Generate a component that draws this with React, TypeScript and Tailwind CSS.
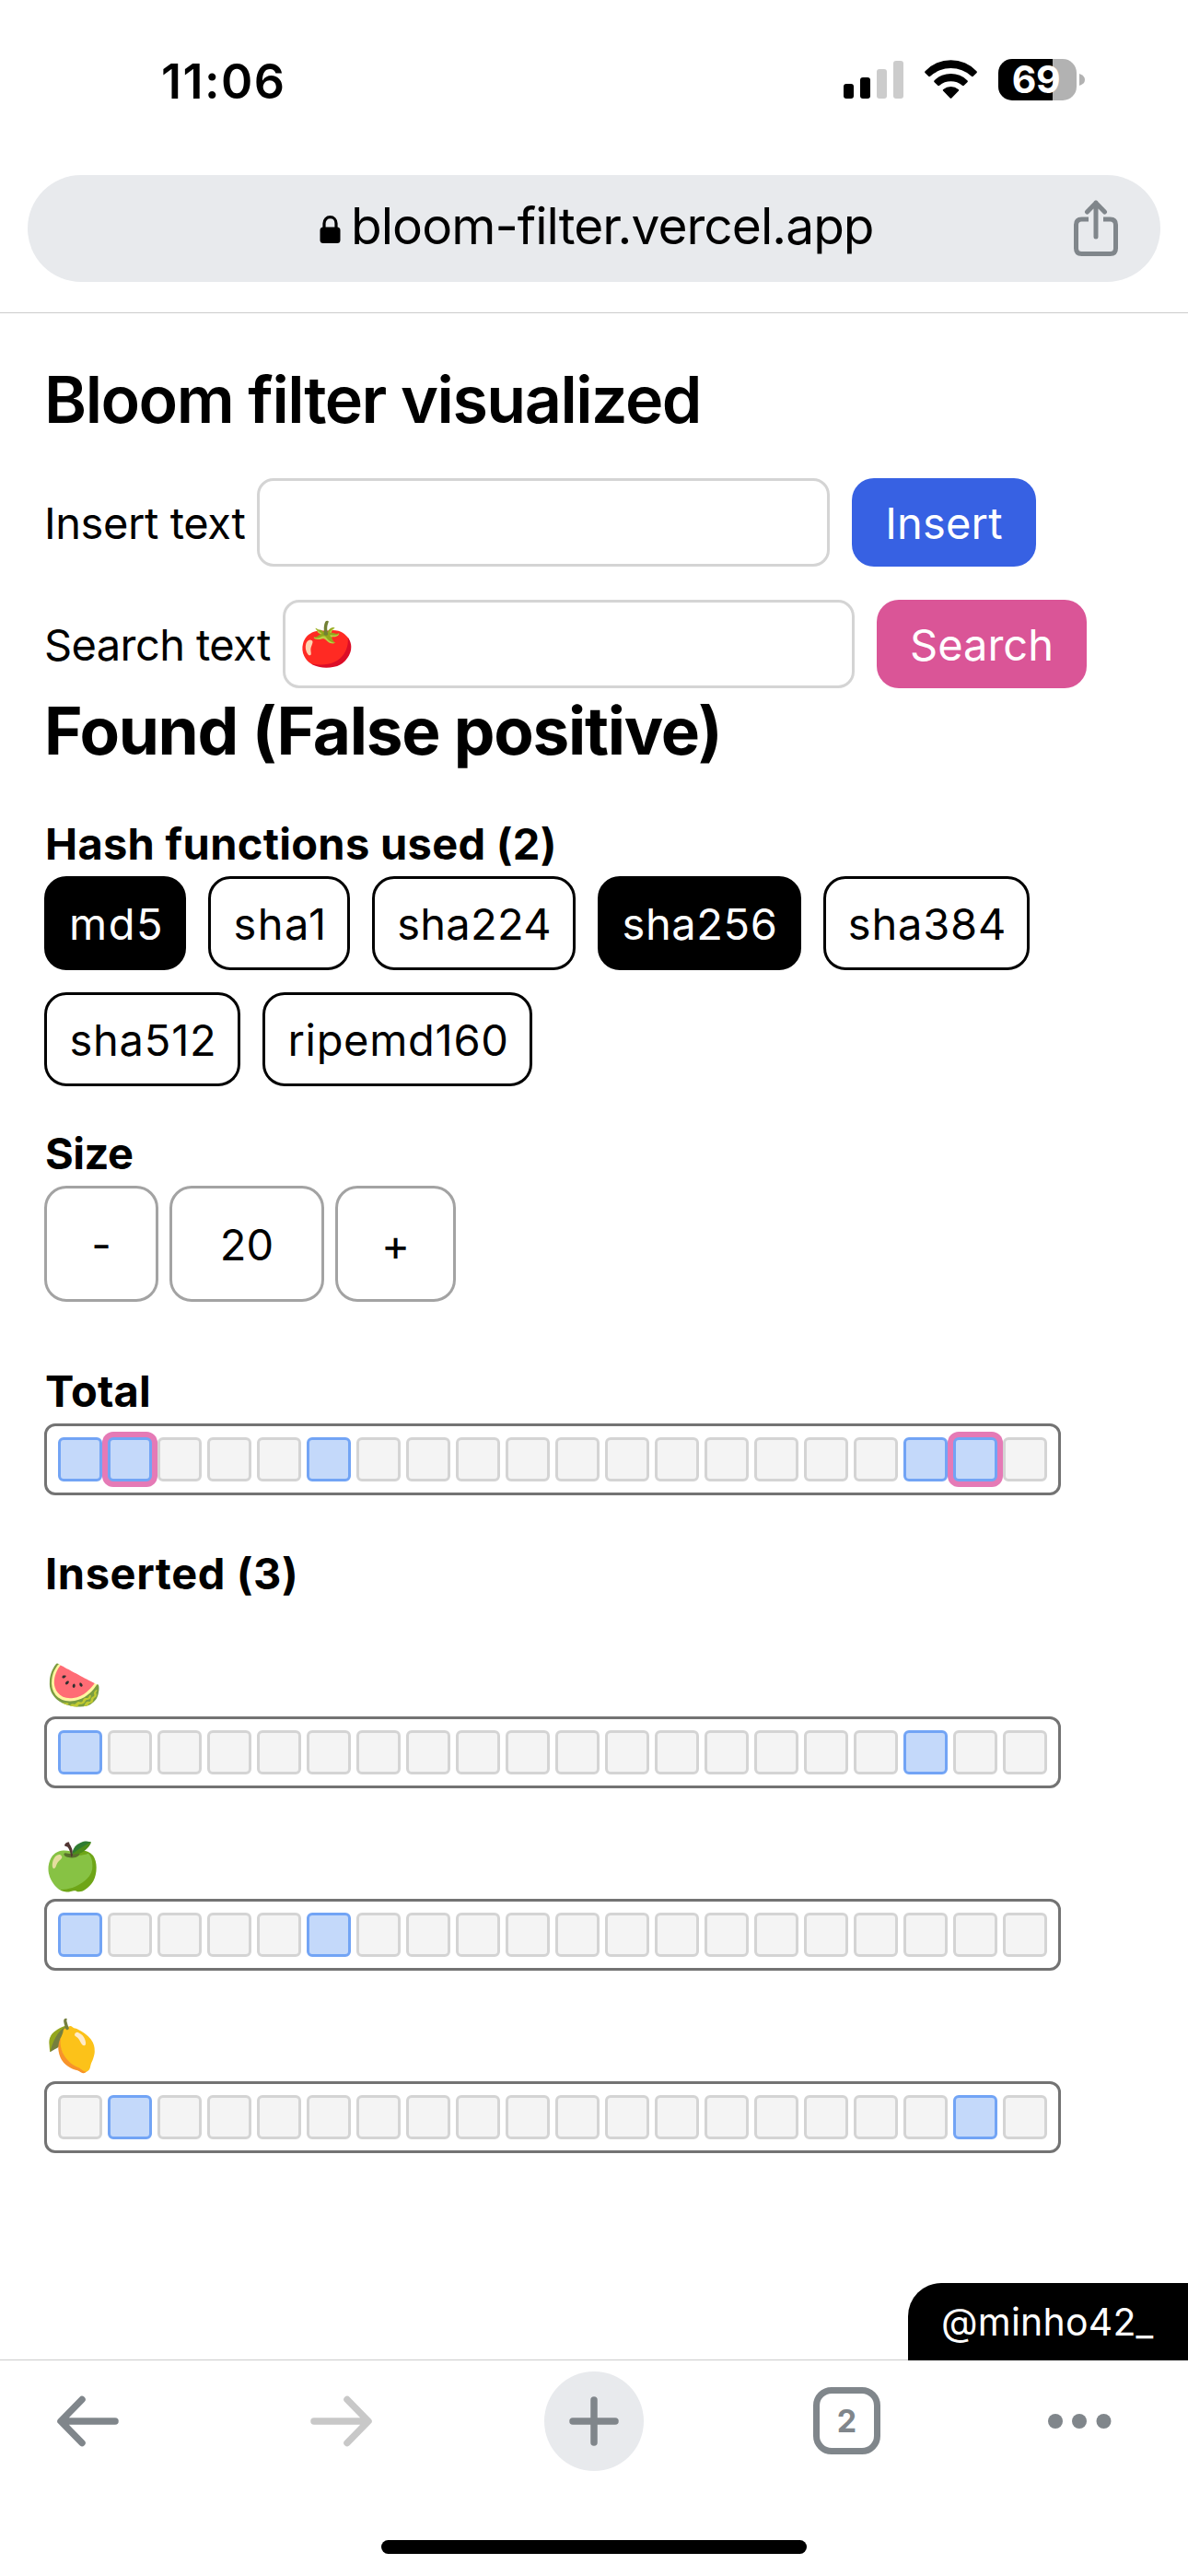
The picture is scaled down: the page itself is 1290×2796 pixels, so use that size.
import type { ReactNode } from "react";

const HASHES = [
  { name: "md5", active: true, cls: "w-[154px] pl-[3px] tracking-[1.5px]" },
  { name: "sha1", active: false, cls: "w-[154px] pl-[3px] tracking-[1.5px]" },
  { name: "sha224", active: false, cls: "w-[221px] pl-[1px] tracking-[0.3px]" },
  { name: "sha256", active: true, cls: "w-[221px] pl-[1px] tracking-[0.6px]" },
  { name: "sha384", active: false, cls: "w-[224px] pl-[2px] tracking-[0.8px]" },
  { name: "sha512", active: false, cls: "w-[213px] pl-[2px] tracking-[0.8px]" },
  { name: "ripemd160", active: false, cls: "w-[293px] pl-[2px] tracking-[0.7px]" },
];

const INSERTED = [
  { emoji: "🍉", bits: [0, 17], cls: "translate-x-[2px] translate-y-[3px] rotate-[4deg]" },
  { emoji: "🍏", bits: [0, 5], cls: "translate-x-[1px] scale-[1.04]" },
  { emoji: "🍋", bits: [1, 18], cls: "translate-x-[2px] -translate-y-[2px] rotate-[28deg]" },
];

const SIZE = 20;

function StatusBar() {
  return (
    <div className="flex h-[190px] items-start justify-between pl-[175px] pr-[112px] pt-[64px]">
      <div className="-mt-[7px] text-[52px] font-semibold leading-[64px] tracking-[1.5px]">11:06</div>
      <div className="flex h-[45px] items-start">
        <svg className="mt-[2px] h-[41px] w-[65px]" viewBox="0 0 65 41">
          <rect x="0" y="25" width="11" height="16" rx="3" fill="#000" />
          <rect x="18" y="18" width="11" height="23" rx="3" fill="#000" />
          <rect x="36" y="9" width="11" height="32" rx="3" fill="#ccc" />
          <rect x="54" y="0" width="11" height="41" rx="3" fill="#ccc" />
        </svg>
        <svg className="ml-[23px] mt-px h-[42px] w-[57px]" viewBox="0 0 57 42" fill="#000">
          <path d="M0.6 14.2Q-0.4 13.2 0.6 12.2A38.5 38.5 0 0 1 56.4 12.2Q57.4 13.2 56.4 14.2L53 17.6Q52 18.6 50.9 17.7A33.5 33.5 0 0 0 6.1 17.7Q5 18.6 4 17.6Z" />
          <path d="M10.6 24.2Q9.6 23.2 10.7 22.2A25.5 25.5 0 0 1 46.3 22.2Q47.4 23.2 46.4 24.2L43 27.6Q42 28.6 40.9 27.7A19.5 19.5 0 0 0 16.1 27.7Q15 28.6 14 27.6Z" />
          <path d="M20.2 33.8Q19.2 32.8 20.3 31.9A13 13 0 0 1 36.7 31.9Q37.8 32.8 36.8 33.8L29.3 41.4Q28.5 42.2 27.7 41.4Z" />
        </svg>
        <div className="ml-[23px] flex h-[45px] w-[85px] items-center justify-center rounded-[15px] bg-[linear-gradient(to_right,#000_59px,#b2b2b2_59px)] pr-[3px]">
          <span className="text-[41px] font-bold leading-[45px] tracking-[-0.5px] text-white">69</span>
        </div>
        <svg className="ml-[3px] mt-[16px] h-[13px] w-[6px]" viewBox="0 0 6 13">
          <path d="M0 0Q6 2 6 6.5Q6 11 0 13Z" fill="#b2b2b2" />
        </svg>
      </div>
    </div>
  );
}

function UrlBar() {
  return (
    <div className="mx-[30px] flex h-[116px] items-center rounded-full bg-[#e8eaed] pl-[317px] pr-[45px]">
      <svg className="mt-[1px] h-[30px] w-[23px]" viewBox="0 0 23 30">
        <path d="M5 14V8.5C5 4.5 7.8 1.6 11.5 1.6S18 4.5 18 8.5V14" fill="none" stroke="#000" strokeWidth="3.2" />
        <rect x="0.5" y="12.5" width="22" height="17.5" rx="3.5" fill="#000" />
      </svg>
      <div className="-mt-[6px] ml-[11px] whitespace-nowrap text-[55px] leading-[72px] tracking-[-0.95px]">bloom-filter.vercel.app</div>
      <svg
        className="ml-auto h-[64px] w-[50px]"
        viewBox="0 0 50 64"
        fill="none"
        stroke="#80868b"
        strokeWidth="5"
        strokeLinecap="round"
        strokeLinejoin="round"
      >
        <path d="M25 41V4M15.5 14L25 4.2L34.5 14" />
        <path d="M17 22H9.5Q3.5 22 3.5 28V53.5Q3.5 59.5 9.5 59.5H40.5Q46.5 59.5 46.5 53.5V28Q46.5 22 40.5 22H33" strokeLinecap="butt" />
      </svg>
    </div>
  );
}

function Heading({ children, className }: { children: ReactNode; className: string }) {
  return <h2 className={`h-[72px] whitespace-nowrap pl-px text-[47px] font-bold leading-[74px] ${className}`}>{children}</h2>;
}

function BitRow({ bits, marked = [] }: { bits: number[]; marked?: number[] }) {
  return (
    <div className="flex h-[78px] w-[1104px] gap-[6px] rounded-[12px] border-3 border-[#737373] p-[12px]">
      {Array.from({ length: SIZE }, (_, i) => (
        <div
          key={i}
          className={`h-[48px] w-[48px] rounded-[6px] border-3 ${
            bits.includes(i) ? "border-[#72a4f5] bg-[#c4d9fa]" : "border-[#d4d4d4] bg-[#f4f4f4]"
          } ${marked.includes(i) ? "ring-6 ring-[#e57ab6]" : ""}`}
        />
      ))}
    </div>
  );
}

function BottomBar() {
  return (
    <div className="h-[235px] border-t border-[#ccc]">
      <div className="flex h-[131px] items-center pl-[60px]">
        <svg className="h-[64px] w-[71px]" viewBox="0 0 71 64" fill="none" stroke="#80868b" strokeWidth="7.5" strokeLinecap="round" strokeLinejoin="round">
          <path d="M65 32H7M29 8.5L6 32L29 55.5" />
        </svg>
        <svg className="ml-[204px] h-[64px] w-[71px]" viewBox="0 0 71 64" fill="none" stroke="#c8c8c8" strokeWidth="7.5" strokeLinecap="round" strokeLinejoin="round">
          <path d="M6 32H64M42 8.5L65 32L42 55.5" />
        </svg>
        <div className="ml-[185px] flex h-[108px] w-[108px] items-center justify-center rounded-full bg-[#e8eaed]">
          <svg className="h-[54px] w-[54px]" viewBox="0 0 54 54" fill="none" stroke="#80868b" strokeWidth="7.5" strokeLinecap="round">
            <path d="M27 4V50M4 27H50" />
          </svg>
        </div>
        <div className="ml-[184px] flex h-[73px] w-[73px] items-center justify-center rounded-[20px] border-[7px] border-[#80868b] text-[34px] font-bold leading-[40px] text-[#80868b]">
          2
        </div>
        <svg className="ml-[181px] h-[16px] w-[70px]" viewBox="0 0 70 16" fill="#80868b">
          <circle cx="9" cy="8" r="8" />
          <circle cx="35" cy="8" r="8" />
          <circle cx="61.500" cy="8" r="8" />
        </svg>
      </div>
      <div className="mx-auto mt-[64px] h-[15px] w-[462px] rounded-full bg-black" />
    </div>
  );
}

export default function App() {
  return (
    <div className="flex h-[2796px] w-[1290px] flex-col overflow-hidden bg-white font-['Inter','Noto_Color_Emoji',sans-serif] text-black">
      <header className="h-[340px] border-b border-[#ccc]">
        <StatusBar />
        <UrlBar />
      </header>

      <main className="relative flex flex-1 flex-col items-start pl-[48px]">
        <h1 className="mt-[45px] h-[96px] whitespace-nowrap text-[70px] font-semibold leading-[98px] tracking-[-1.5px]">
          Bloom filter visualized
        </h1>

        <div className="mt-[38px] flex h-[96px] text-[47px] leading-[98px]">
          <label className="w-[231px] whitespace-nowrap tracking-[-0.4px]">Insert text</label>
          <div className="h-[96px] w-[622px] rounded-[18px] border-3 border-[#d4d4d4]" />
          <button className="ml-[24px] w-[200px] rounded-[24px] bg-[#3761e3] pt-[2px] leading-[94px] tracking-[0.2px] text-white">Insert</button>
        </div>

        <div className="mt-[36px] flex h-[96px] text-[47px] leading-[98px]">
          <label className="w-[259px] whitespace-nowrap tracking-[-0.6px]">Search text</label>
          <div className="h-[96px] w-[621px] rounded-[18px] border-3 border-[#d4d4d4] pl-[15px] text-[48px] leading-[90px]">🍅</div>
          <button className="ml-[24px] w-[228px] rounded-[24px] bg-[#da5597] pt-[2px] leading-[94px] text-white">Search</button>
        </div>

        <h1 className="h-[92px] whitespace-nowrap text-[71px] font-bold leading-[92px] tracking-[-1.25px]">Found (False positive)</h1>

        <Heading className="mt-[40px] tracking-[0.3px]">Hash functions used (2)</Heading>
        <div className="flex w-[1194px] flex-wrap gap-[24px]">
          {HASHES.map((h) => (
            <button
              key={h.name}
              className={`h-[102px] rounded-[24px] border-3 border-black pt-[2px] text-[47px] leading-[94px] ${h.cls} ${
                h.active ? "bg-black text-white" : "bg-white text-black"
              }`}
            >
              {h.name}
            </button>
          ))}
        </div>

        <Heading className="mt-[36px] tracking-[-0.5px]">Size</Heading>
        <div className="flex gap-[12px] text-center text-[47px] leading-[120px]">
          <button className="h-[126px] w-[124px] rounded-[24px] border-3 border-[#a3a3a3] pt-[2px] leading-[118px]">-</button>
          <div className="h-[126px] w-[168px] rounded-[24px] border-3 border-[#a3a3a3] pt-[2px] leading-[118px]">20</div>
          <button className="h-[126px] w-[131px] rounded-[24px] border-3 border-[#a3a3a3] pt-[2px] leading-[118px]">+</button>
        </div>

        <Heading className="mt-[60px] tracking-[0.2px]">Total</Heading>
        <BitRow bits={[0, 1, 5, 17, 18]} marked={[1, 18]} />

        <Heading className="mt-[48px] tracking-[0.6px]">Inserted (3)</Heading>
        {INSERTED.map((item) => (
          <section key={item.emoji} className="mt-[48px]">
            <div className="h-[72px] text-[49px] leading-[72px]">
              <span className={`inline-block ${item.cls}`}>{item.emoji}</span>
            </div>
            <BitRow bits={item.bits} />
          </section>
        ))}

        <div className="absolute -bottom-px right-0 h-[84px] w-[304px] rounded-tl-[36px] bg-black pl-[36px] text-[41px] leading-[84px] tracking-[0.2px] text-white">
          @minho42_
        </div>
      </main>

      <BottomBar />
    </div>
  );
}
